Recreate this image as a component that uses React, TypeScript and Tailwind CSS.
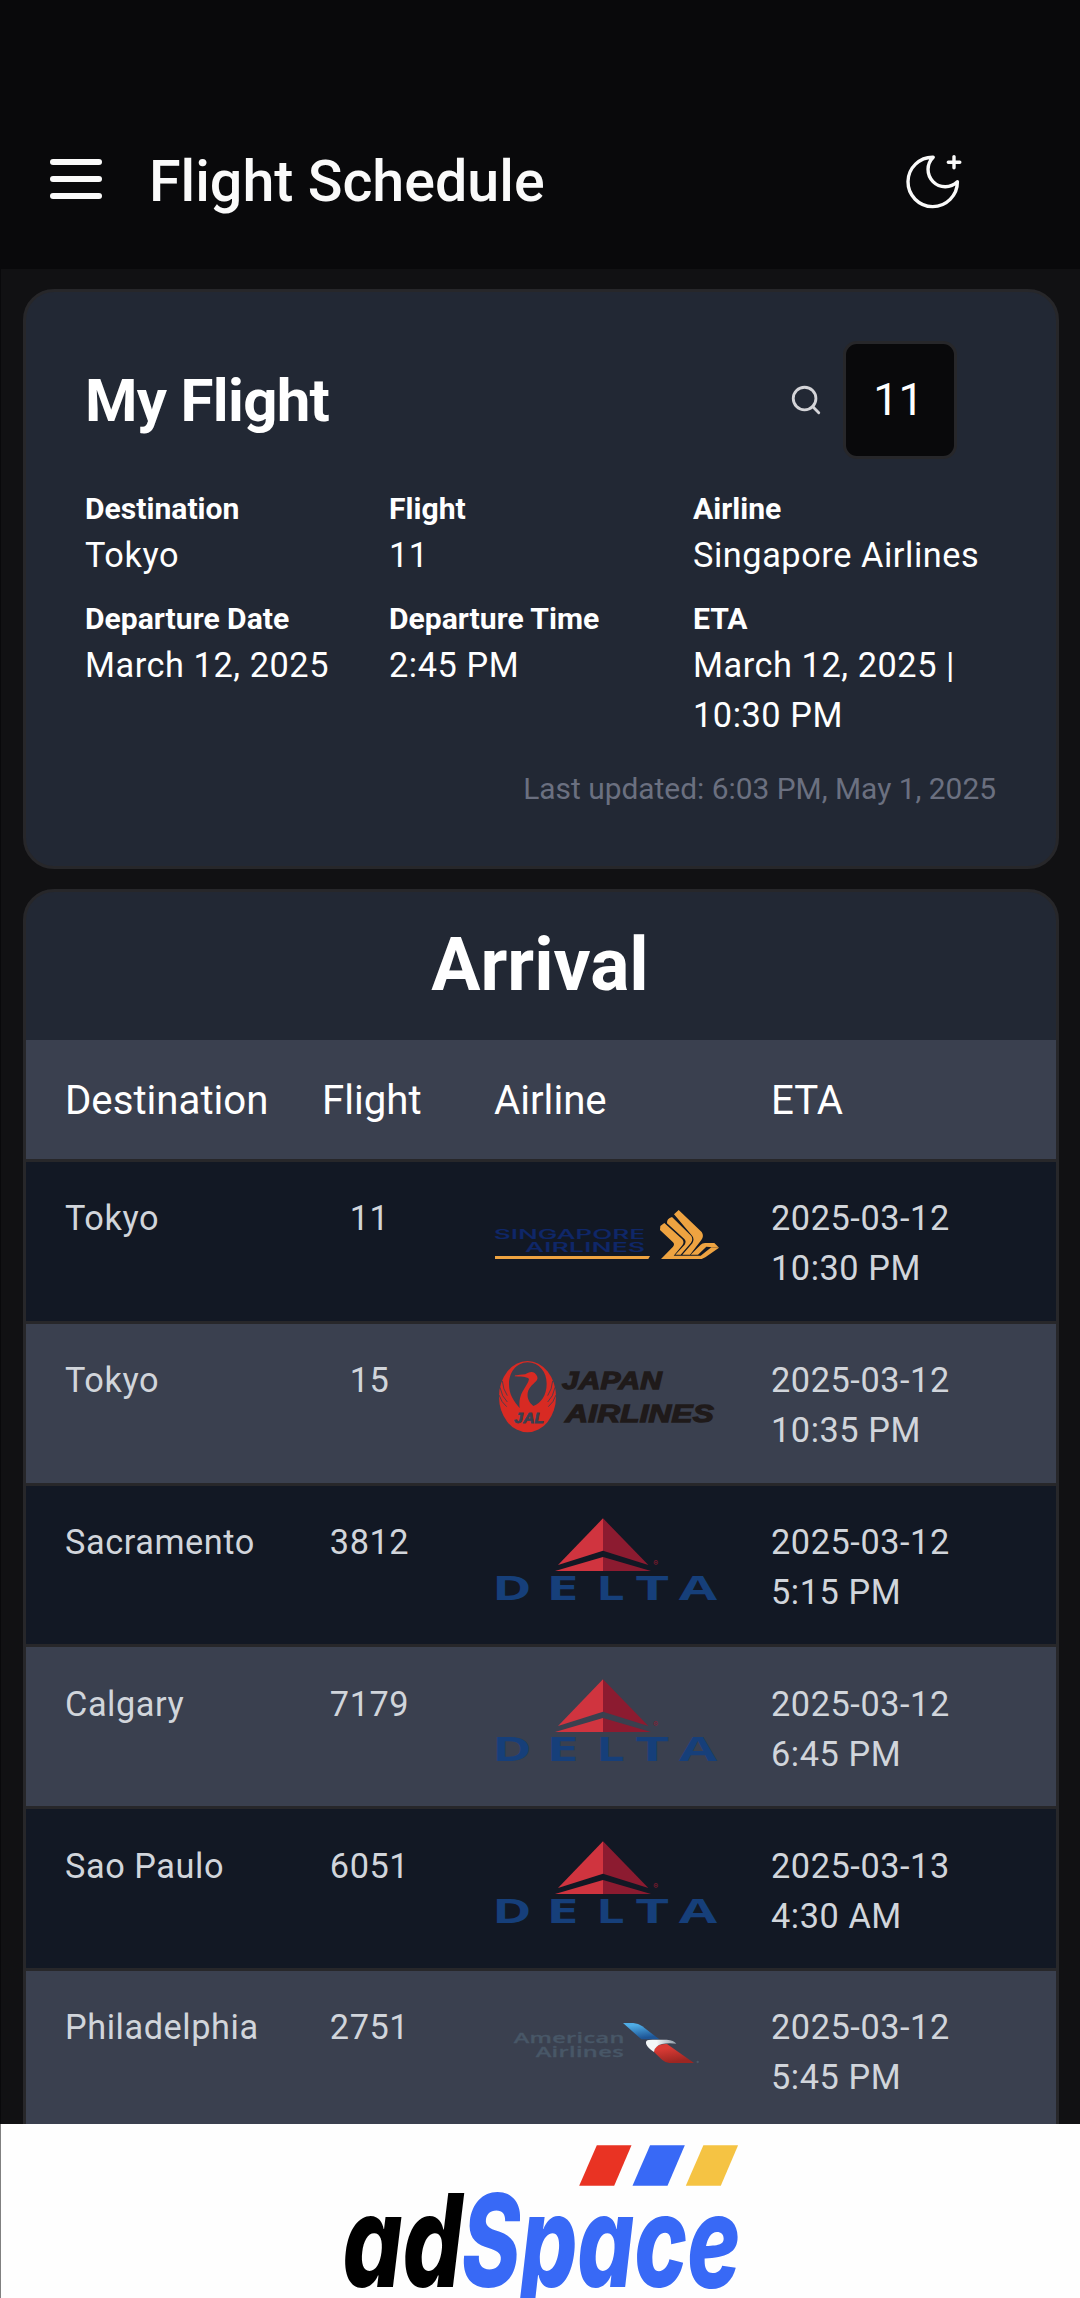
import type { ReactNode } from "react";
import { Search } from "lucide-react";

/* ---------- Airline logos (810 × 477 drawing units per table row, cropped to the logo column) ---------- */

function LogoFrame({ top, children }: { top: number; children: ReactNode }) {
  return (
    <svg viewBox={`72 ${top} 681 477`} className="block h-[159px] w-[227px] overflow-visible" aria-hidden="true">
      {children}
    </svg>
  );
}

function SingaporeLogo() {
  return (
    <LogoFrame top={-54}>
      <g fill="#0f2769" stroke="#0f2769" strokeWidth="0.600" fontFamily="Inter, sans-serif" fontWeight="500">
        <text x="72" y="178" fontSize="39" textLength="454" lengthAdjust="spacingAndGlyphs">SINGAPORE</text>
        <text x="166" y="216" fontSize="38" textLength="360" lengthAdjust="spacingAndGlyphs">AIRLINES</text>
      </g>
      <path d="M75 228H540L535 237H75Z" fill="#eea341" />
      <g fill="#eea341">
        <path d="M570 150L571 138L583 129L637 178Q644 187 637 196L611 227L692 227L724 202L747 203L706 232L695 237H573L609 200Q615 193 609 187Z" />
        <path d="M591 130Q590 115 606 111L664 168Q670 178 663 188L632 224H616L644 194Q650 184 643 177Z" />
        <path d="M612 103L626 90L695 156Q703 168 694 180L660 224H637L667 190Q674 178 667 168Z" />
        <path d="M662 224L692 194Q697 189 705 189H733L747 203L709 200L684 224Z" />
      </g>
    </LogoFrame>
  );
}

function JalLogo() {
  return (
    <LogoFrame top={-18}>
      <ellipse cx="172.500" cy="200" rx="85.500" ry="107" fill="#d82a23" />
      <path d="M173 97C138 98 117 128 117 163C117 195 132 214 149 234C147 212 150 198 160 181C168 167 176 156 177 147C172 142 163 140 134 139C134 136 140 135 166 133C174 126 187 123 194 129C201 136 205 143 201 150C194 160 176 170 173 189C171 205 177 217 190 228C213 219 230 196 230 161C230 126 208 98 173 97Z" fill="#3a404f" />
      <g stroke="#3a404f" strokeWidth="2.500" fill="none">
        <path d="M97 153Q99 178 112 197" />
        <path d="M90 172Q95 200 112 216" />
        <path d="M87 195Q94 217 110 230" />
        <path d="M248 153Q246 178 233 197" />
        <path d="M255 172Q250 200 233 216" />
        <path d="M258 195Q251 217 235 230" />
      </g>
      <g fontFamily="'Liberation Sans', sans-serif" fontWeight="700" fontStyle="italic">
        <text x="133" y="279" fontSize="46" textLength="90" lengthAdjust="spacingAndGlyphs" fill="#3a404f" stroke="#3a404f" strokeWidth="2.500">JAL</text>
        <g fill="#1f1a1a" stroke="#1f1a1a" strokeWidth="4">
          <text x="276" y="177" fontSize="74" textLength="300" lengthAdjust="spacingAndGlyphs">JAPAN</text>
          <text x="286" y="277" fontSize="74" textLength="446" lengthAdjust="spacingAndGlyphs">AIRLINES</text>
        </g>
      </g>
    </LogoFrame>
  );
}

function DeltaLogo() {
  const letters: [string, number, number][] = [
    ["D", 67, 119],
    ["E", 229, 98],
    ["L", 379, 86],
    ["T", 496, 103],
    ["A", 626, 116],
  ];
  return (
    <LogoFrame top={-12}>
      <path d="M399 85V182L264 225Z" fill="#d0343f" />
      <path d="M399 85V182L535 225Z" fill="#8c1b30" />
      <path d="M399 201V243H255Z" fill="#d0343f" />
      <path d="M399 201V243H543Z" fill="#8c1b30" />
      <text x="550" y="228" fontSize="22" fill="#8c1b30" fontFamily="Inter, sans-serif" fontWeight="700">®</text>
      <g fill="#163f7a" fontFamily="'Open Sans', sans-serif" fontWeight="700" fontSize="104">
        {letters.map(([ch, x, w]) => (
          <text key={ch} x={x} y="330" textLength={w} lengthAdjust="spacingAndGlyphs">{ch}</text>
        ))}
      </g>
    </LogoFrame>
  );
}

function AmericanLogo() {
  return (
    <LogoFrame top={-87}>
      <defs>
        <linearGradient id="aa-blue" x1="0" y1="0" x2="0.300" y2="1">
          <stop offset="0.200" stopColor="#4fade6" />
          <stop offset="1" stopColor="#1d5596" />
        </linearGradient>
        <linearGradient id="aa-red" x1="0" y1="0" x2="0.300" y2="1">
          <stop offset="0.300" stopColor="#d93a34" />
          <stop offset="1" stopColor="#9c2622" />
        </linearGradient>
        <linearGradient id="aa-white" x1="0" y1="0" x2="1" y2="0">
          <stop offset="0.350" stopColor="#f3f6f8" />
          <stop offset="1" stopColor="#8d99a5" />
        </linearGradient>
      </defs>
      <g fill="#485767" stroke="#485767" strokeWidth="0.800" fontFamily="'Open Sans', sans-serif" fontWeight="600">
        <text x="131" y="130" fontSize="43" textLength="333" lengthAdjust="spacingAndGlyphs">American</text>
        <text x="197" y="170" fontSize="43" textLength="265" lengthAdjust="spacingAndGlyphs">Airlines</text>
      </g>
      <path d="M459 69H490Q505 70 517 79L568 118H514Z" fill="url(#aa-blue)" />
      <path d="M552 156C552 140 566 131 591 132L672 189H598Q586 188 576 179Z" fill="url(#aa-red)" />
      <path d="M552 156C534 144 523 130 530 122Q534 119 548 119H590Q612 120 619 131Q575 127 560 140Q551 147 552 156Z" fill="url(#aa-white)" />
      <circle cx="683" cy="186" r="3.500" fill="#4c5866" />
    </LogoFrame>
  );
}

/* ---------- Icons ---------- */

function MoonPlusIcon() {
  return (
    <svg viewBox="0 0 60 60" className="h-[60px] w-[60px]" fill="none" stroke="#fafafa" strokeWidth="3.400" strokeLinecap="round" strokeLinejoin="round" aria-hidden="true">
      <path d="M31.200 7.200A24.700 24.700 0 1 0 55.400 31.800A17.200 17.200 0 0 1 31.200 7.200Z" />
      <path d="M52 6.600V17.800M46.300 12.200H57.800" />
    </svg>
  );
}

/* ---------- Data ---------- */

const details: [string, string][] = [
  ["Destination", "Tokyo"],
  ["Flight", "11"],
  ["Airline", "Singapore Airlines"],
  ["Departure Date", "March 12, 2025"],
  ["Departure Time", "2:45 PM"],
  ["ETA", "March 12, 2025 | 10:30 PM"],
];

const flights = [
  { city: "Tokyo", flight: "11", Logo: SingaporeLogo, date: "2025-03-12", time: "10:30 PM" },
  { city: "Tokyo", flight: "15", Logo: JalLogo, date: "2025-03-12", time: "10:35 PM" },
  { city: "Sacramento", flight: "3812", Logo: DeltaLogo, date: "2025-03-12", time: "5:15 PM" },
  { city: "Calgary", flight: "7179", Logo: DeltaLogo, date: "2025-03-12", time: "6:45 PM" },
  { city: "Sao Paulo", flight: "6051", Logo: DeltaLogo, date: "2025-03-13", time: "4:30 AM" },
  { city: "Philadelphia", flight: "2751", Logo: AmericanLogo, date: "2025-03-12", time: "5:45 PM" },
];

/* ---------- Sections ---------- */

function Header() {
  return (
    <header className="flex h-[269px] shrink-0 items-center bg-[#09090b] pt-[93px] pr-[118px] pl-[49px]">
      <button aria-label="Menu" className="-mt-[4px] flex w-[52px] flex-col gap-[11.500px]">
        <span className="h-[5.500px] rounded-full bg-[#fafafa]" />
        <span className="h-[5.500px] rounded-full bg-[#fafafa]" />
        <span className="h-[5.500px] rounded-full bg-[#fafafa]" />
      </button>
      <h1 className="ml-[47px] pt-[2px] text-[57.400px] leading-none font-medium text-[#fafafa]">Flight Schedule</h1>
      <button aria-label="Toggle theme" className="-mt-[2px] ml-auto">
        <MoonPlusIcon />
      </button>
    </header>
  );
}

function MyFlight() {
  return (
    <section className="h-[580px] shrink-0 rounded-[31px] border-3 border-[#27272a] bg-[#222834] pt-[49px] pl-[59px]">
      <div className="flex h-[118px] items-center pr-[99px]">
        <h2 className="shrink-0 pt-[2px] text-[60px] leading-none font-bold tracking-[-0.700px]">My Flight</h2>
        <Search className="ml-auto size-[34px] shrink-0 text-[#d4d4d8]" strokeWidth={2} />
        <div className="ml-[20px] flex h-[118px] w-[114px] shrink-0 items-center justify-center rounded-[14px] border-3 border-[#27272a] bg-[#09090b] pr-[3px] text-[44.800px]">
          11
        </div>
      </div>
      <dl className="mt-[29px] grid grid-cols-[304px_304px_304px] gap-y-[18px]">
        {details.map(([label, value]) => (
          <div key={label}>
            <dt className="text-[30.100px] leading-[42px] font-bold">{label}</dt>
            <dd className="text-[34.300px] leading-[50px] tracking-[0.560px]">{value}</dd>
          </div>
        ))}
      </dl>
      <p className="mt-[28px] pr-[60px] text-right text-[29.900px] leading-[42px] text-[#6b7080]">
        Last updated: 6:03 PM, May 1, 2025
      </p>
    </section>
  );
}

function Arrival() {
  return (
    <section className="mt-[20px] shrink-0 overflow-hidden rounded-t-[31px] border-3 border-[#27272a] bg-[#222834]">
      <h2 className="flex h-[148px] items-center justify-center pr-[2px] pb-px text-[73.300px] leading-none font-bold">
        Arrival
      </h2>
      <div className="grid h-[122px] grid-cols-[257px_172px_277px_1fr] items-center border-b-3 border-[#27272a] bg-[#3a404f] pt-[4px] pl-[39px] text-[40.200px]">
        <span>Destination</span>
        <span>Flight</span>
        <span>Airline</span>
        <span>ETA</span>
      </div>
      <div>
        {flights.map(({ city, flight, Logo, date, time }) => (
          <div
            key={flight}
            className="grid h-[161.800px] grid-cols-[257px_172px_277px_1fr] border-b-3 border-[#27272a] pl-[39px] text-[34.300px] leading-[50px] tracking-[0.560px] text-[#d1d5db] odd:bg-[#121824] even:bg-[#3a404f]"
          >
            <span className="pt-[31.400px]">{city}</span>
            <span className="w-[95px] pt-[31.400px] text-center">{flight}</span>
            <Logo />
            <span className="pt-[31.400px]">
              {date}
              <br />
              {time}
            </span>
          </div>
        ))}
      </div>
    </section>
  );
}

function AdBanner() {
  return (
    <footer className="-ml-px flex h-[174px] shrink-0 justify-center border-l border-[#808080] bg-[#fefefe]">
      <svg viewBox="320.500 0 440 174" className="block h-[174px] w-[440px]">
        <path d="M596.300 21.300H631L613.700 61.700H578.700Z" fill="#e93323" />
        <path d="M649.600 21.300H684.300L667 61.700H632Z" fill="#3869f6" />
        <path d="M702.900 21.300H737.600L720.300 61.700H685.300Z" fill="#f5c343" />
        <g fontFamily="Inter, sans-serif" fontWeight="800" fontStyle="italic" fontSize="129">
          <text x="342" y="162.500" textLength="120" lengthAdjust="spacingAndGlyphs" fill="#000000">ad</text>
          <text x="461" y="162.500" textLength="279" lengthAdjust="spacingAndGlyphs" fill="#3869f6">Space</text>
        </g>
      </svg>
    </footer>
  );
}

export default function App() {
  return (
    <div className="h-[2298px] w-[1080px] overflow-hidden bg-[#09090b] pl-px font-['Roboto',sans-serif] text-white">
      <div className="flex h-full flex-col bg-[#111113]">
        <Header />
        <main className="flex min-h-0 flex-1 flex-col overflow-hidden pt-[20px] pr-[21px] pl-[22px]">
          <MyFlight />
          <Arrival />
        </main>
        <AdBanner />
      </div>
    </div>
  );
}
